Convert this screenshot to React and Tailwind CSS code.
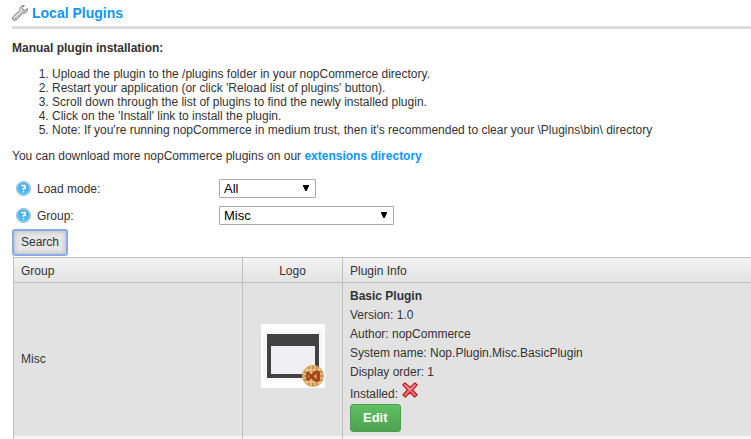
import React from "react";

function Wrench() {
  return (
    <svg width="16" height="16" viewBox="0 0 16 16" aria-hidden="true">
      <path
        d="M12.4 0.6 C10 0 7.6 1.8 7.8 4.4 L8 5.4 L1.2 11.4 C0.2 12.4 0.2 13.8 1 14.8 C2 15.8 3.6 15.8 4.6 14.8 L10.6 8 L11.8 8.2 C14.4 8.2 16 6 15.4 3.5 L13.2 5.4 L11 5 L10.5 2.7 Z"
        fill="#c9c9c9"
        stroke="#777"
        strokeWidth="0.9"
        strokeLinejoin="round"
      />
      <path d="M1.9 12.8 L9 6.2 L9 4.2 C9 3 9.6 2.2 10.4 1.7" fill="none" stroke="#f2f2f2" strokeWidth="1" />
      <path d="M2.8 13.4 h0.8" stroke="#777" strokeWidth="1" />
    </svg>
  );
}

function Help() {
  return (
    <svg width="15" height="15" viewBox="0 0 15 15" aria-hidden="true">
      <defs>
        <linearGradient id="help-fill" x1="0" y1="0" x2="0" y2="1">
          <stop offset="0" stopColor="#4fa9dc" />
          <stop offset="1" stopColor="#49c1fb" />
        </linearGradient>
      </defs>
      <circle cx="7.5" cy="7.5" r="7" fill="#b9def5" stroke="#5aa3d2" strokeWidth="0.7" />
      <circle cx="7.5" cy="7.5" r="5.9" fill="url(#help-fill)" />
      <path d="M5 4.5 H9.2 V7.2 H7.5 V9 M7.5 10 V11.5" fill="none" stroke="#fff" strokeWidth="1.4" />
    </svg>
  );
}

function Cross() {
  return (
    <svg width="16" height="16" viewBox="0 0 16 16" aria-label="No" role="img">
      <path
        d="M3 0.8 L8 5.4 L13 0.8 L15.2 2.8 L10.6 7.9 L15.2 12.8 L12.6 15.1 L8 10.4 L3.4 15.1 L0.8 12.8 L5.4 7.9 L0.8 2.8 Z"
        fill="#f0686c"
        stroke="#b9141a"
        strokeWidth="1.1"
        strokeLinejoin="round"
      />
      <path d="M2.8 2.8 L8 7.6 L13 2.8" fill="none" stroke="#fbb0b2" strokeWidth="1" />
    </svg>
  );
}

function PluginLogo() {
  return (
    <svg width="64" height="64" viewBox="0 0 64 64" role="img" aria-label="Basic Plugin logo">
      <rect width="64" height="64" fill="#fff" />
      <rect x="2" y="6" width="60" height="52" fill="#f7f7f7" />
      <rect x="6" y="10" width="52" height="44" fill="#424242" />
      <rect x="10" y="22" width="44" height="28" fill="#f0f0f2" />
      <circle cx="52" cy="52" r="10.6" fill="#c78f4a" stroke="#dcae68" strokeWidth="1" />
      <path
        d="M46 43.5 V60.5 M50 42 V62 M54 42 V62 M58 43.5 V60.5 M43.5 46 H60.5 M42 50 H62 M42 54 H62 M43.5 58 H60.5"
        stroke="#ecc88a"
        strokeWidth="1.5"
      />
      <path
        d="M55 46 L59 47.6 V57 L55 58.6 L50.4 54.4 L47 57 L45 56 V48.6 L47 47.6 L50.4 50.2 Z M55.6 49.8 L52.6 52.3 L55.6 54.8 Z M46.8 50.6 V54 L48.6 52.3 Z"
        fill="#a5481c"
        fillRule="evenodd"
      />
    </svg>
  );
}

function FilterRow({ id, label, value, width }) {
  return (
    <div className="flex h-[27px] items-center">
      <div className="flex w-[207px] shrink-0 items-center gap-[6px] pl-1">
        <Help />
        <label htmlFor={id}>{label}</label>
      </div>
      <div className="relative flex">
        <select
          id={id}
          defaultValue={value}
          className={`h-[19px] appearance-none rounded-[1px] border border-[#a9a9a9] bg-white pl-1 text-[13px] leading-4 text-black ${width}`}
        >
          <option>{value}</option>
        </select>
        <svg
          className="pointer-events-none absolute right-[7px] top-[6px]"
          width="6"
          height="6"
          viewBox="0 0 6 6"
          aria-hidden="true"
        >
          <path d="M0 0 H6 V1 L3.6 6 H2.4 L0 1 Z" fill="#000" />
        </svg>
      </div>
    </div>
  );
}

const steps = [
  "Upload the plugin to the /plugins folder in your nopCommerce directory.",
  "Restart your application (or click 'Reload list of plugins' button).",
  "Scroll down through the list of plugins to find the newly installed plugin.",
  "Click on the 'Install' link to install the plugin.",
  "Note: If you're running nopCommerce in medium trust, then it's recommended to clear your \\Plugins\\bin\\ directory",
];

const details = [
  "Version: 1.0",
  "Author: nopCommerce",
  "System name: Nop.Plugin.Misc.BasicPlugin",
  "Display order: 1",
];

export default function App() {
  return (
    <main className="bg-white pl-3 font-['Liberation_Sans',Arial,sans-serif] text-[12px] leading-[14px] text-[#333]">
      <header className="flex h-[29px] items-start gap-1 border-b-[3px] border-[#ddd] pt-[5px]">
        <Wrench />
        <h1 className="text-[14px] font-bold leading-4 text-[#0d96fb]">Local Plugins</h1>
      </header>

      <section className="pt-3">
        <p className="font-bold">Manual plugin installation:</p>
        <ol className="my-3 list-decimal pl-10">
          {steps.map((step) => (
            <li key={step}>{step}</li>
          ))}
        </ol>
        <p>
          You can download more nopCommerce plugins on our{" "}
          <a href="#extensions" className="font-bold text-[#0d96fb]">
            extensions directory
          </a>
        </p>
      </section>

      <form className="pt-3" onSubmit={(e) => e.preventDefault()}>
        <FilterRow id="load-mode" label="Load mode:" value="All" width="w-[97px]" />
        <FilterRow id="group" label="Group:" value="Misc" width="w-[175px]" />
        <button
          type="submit"
          className="block h-[27px] rounded-[3px] border-2 border-[#86abea] bg-[#e6e6e6] px-[7px] pb-[2px] shadow-[inset_0_0_4px_1px_#c0c0c0]"
        >
          Search
        </button>
      </form>

      <div className="pl-px pt-px">
        <table className="w-full table-fixed border-separate border-spacing-0 border-l border-t border-[#c0c0c0]">
          <colgroup>
            <col className="w-[229px]" />
            <col className="w-[100px]" />
            <col />
          </colgroup>
          <thead>
            <tr className="h-[25px] bg-linear-to-b from-[#f3f3f3] to-[#e2e2e2]">
              <th className="border-b border-r border-[#c0c0c0] px-[7px] pt-[2px] text-left font-normal">Group</th>
              <th className="border-b border-r border-[#c0c0c0] pt-[2px] font-normal">Logo</th>
              <th className="border-b border-[#c0c0c0] px-[7px] pt-[2px] text-left font-normal">Plugin Info</th>
            </tr>
          </thead>
          <tbody>
            <tr className="bg-[#e2e2e2]">
              <td className="border-r border-[#c0c0c0] px-[7px] pb-[2px]">Misc</td>
              <td className="border-r border-[#c0c0c0] pb-[7px]">
                <div className="flex justify-center">
                  <PluginLogo />
                </div>
              </td>
              <td className="px-[7px] py-1 leading-[19px]">
                <p className="font-bold">Basic Plugin</p>
                {details.map((line) => (
                  <p key={line}>{line}</p>
                ))}
                <p className="flex h-[22px] items-start gap-1">
                  <span className="pt-[3px]">Installed:</span>
                  <Cross />
                </p>
                <button
                  type="button"
                  className="block h-7 rounded-[3px] border border-[#4a9e4c] bg-linear-to-b from-[#5fc062] to-[#4fa152] px-3 pb-[2px] text-[13px] font-bold text-white"
                >
                  Edit
                </button>
              </td>
            </tr>
            <tr className="h-[3px] bg-[#f5f5f5]">
              <td className="border-r border-[#c0c0c0]" />
              <td className="border-r border-[#c0c0c0]" />
              <td />
            </tr>
          </tbody>
        </table>
      </div>
    </main>
  );
}
